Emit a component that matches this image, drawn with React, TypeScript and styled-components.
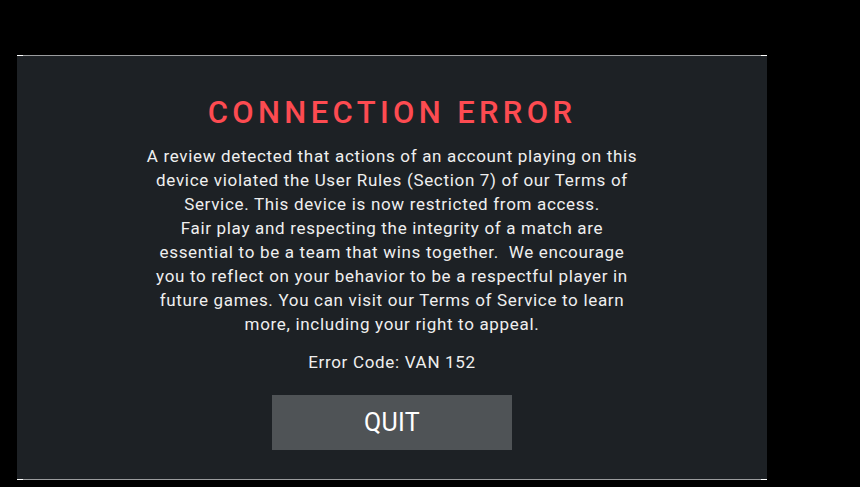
import React from "react";
import styled, { createGlobalStyle } from "styled-components";

const Global = createGlobalStyle`
  html, body { margin: 0; padding: 0; background: #000; }
  body { width: 860px; height: 487px; overflow: hidden; font-family: Roboto, "Liberation Sans", sans-serif; }
`;

const Screen = styled.div`
  width: 860px;
  height: 487px;
  background: #000;
  padding: 55px 0 0 17px;
  box-sizing: border-box;
`;

const Panel = styled.div`
  position: relative;
  width: 750px;
  height: 425px;
  background: #1d2125;
  border-top: 1px solid #9a9c9e;
  border-bottom: 1px solid #9a9c9e;
  box-sizing: border-box;
  display: flex;
  flex-direction: column;
  align-items: center;
  padding-top: 39px;
`;

const Tick = styled.span<{ $side: "left" | "right"; $edge: "top" | "bottom" }>`
  position: absolute;
  ${(p) => p.$side}: 0;
  ${(p) => p.$edge}: -1px;
  width: 6px;
  height: 1px;
  background: #fff;
`;

const Title = styled.h1`
  margin: 0;
  color: #fd4b51;
  font-family: Roboto, sans-serif;
  font-weight: 500;
  font-size: 31px;
  letter-spacing: 4.35px;
  line-height: 36px;
`;

const Body = styled.p`
  margin: 13px 0 0;
  color: #efefef;
  font-size: 17px;
  letter-spacing: 0.68px;
  line-height: 24px;
  text-align: center;
  white-space: nowrap;
`;

const Code = styled.p`
  margin: 14px 0 0;
  color: #efefef;
  font-size: 17px;
  letter-spacing: 0.68px;
  line-height: 24px;
`;

const QuitButton = styled.button`
  margin-top: 21px;
  width: 240px;
  height: 55px;
  border: none;
  background: #4f5356;
  color: #fff;
  font-family: Roboto, sans-serif;
  font-size: 25px;
  letter-spacing: 0.3px;
  cursor: pointer;
`;

const lines = [
  "A review detected that actions of an account playing on this",
  "device violated the User Rules (Section 7) of our Terms of",
  "Service. This device is now restricted from access.",
  "Fair play and respecting the integrity of a match are",
  "essential to be a team that wins together.\u00a0 We encourage",
  "you to reflect on your behavior to be a respectful player in",
  "future games. You can visit our Terms of Service to learn",
  "more, including your right to appeal.",
];

export default function App() {
  return (
    <>
      <Global />
      <Screen>
        <Panel>
          <Tick $side="left" $edge="top" />
          <Tick $side="right" $edge="top" />
          <Tick $side="left" $edge="bottom" />
          <Tick $side="right" $edge="bottom" />
          <Title>CONNECTION ERROR</Title>
          <Body>
            {lines.map((l, i) => (
              <React.Fragment key={i}>
                {l}
                {i < lines.length - 1 && <br />}
              </React.Fragment>
            ))}
          </Body>
          <Code>Error Code: VAN 152</Code>
          <QuitButton>QUIT</QuitButton>
        </Panel>
      </Screen>
    </>
  );
}
